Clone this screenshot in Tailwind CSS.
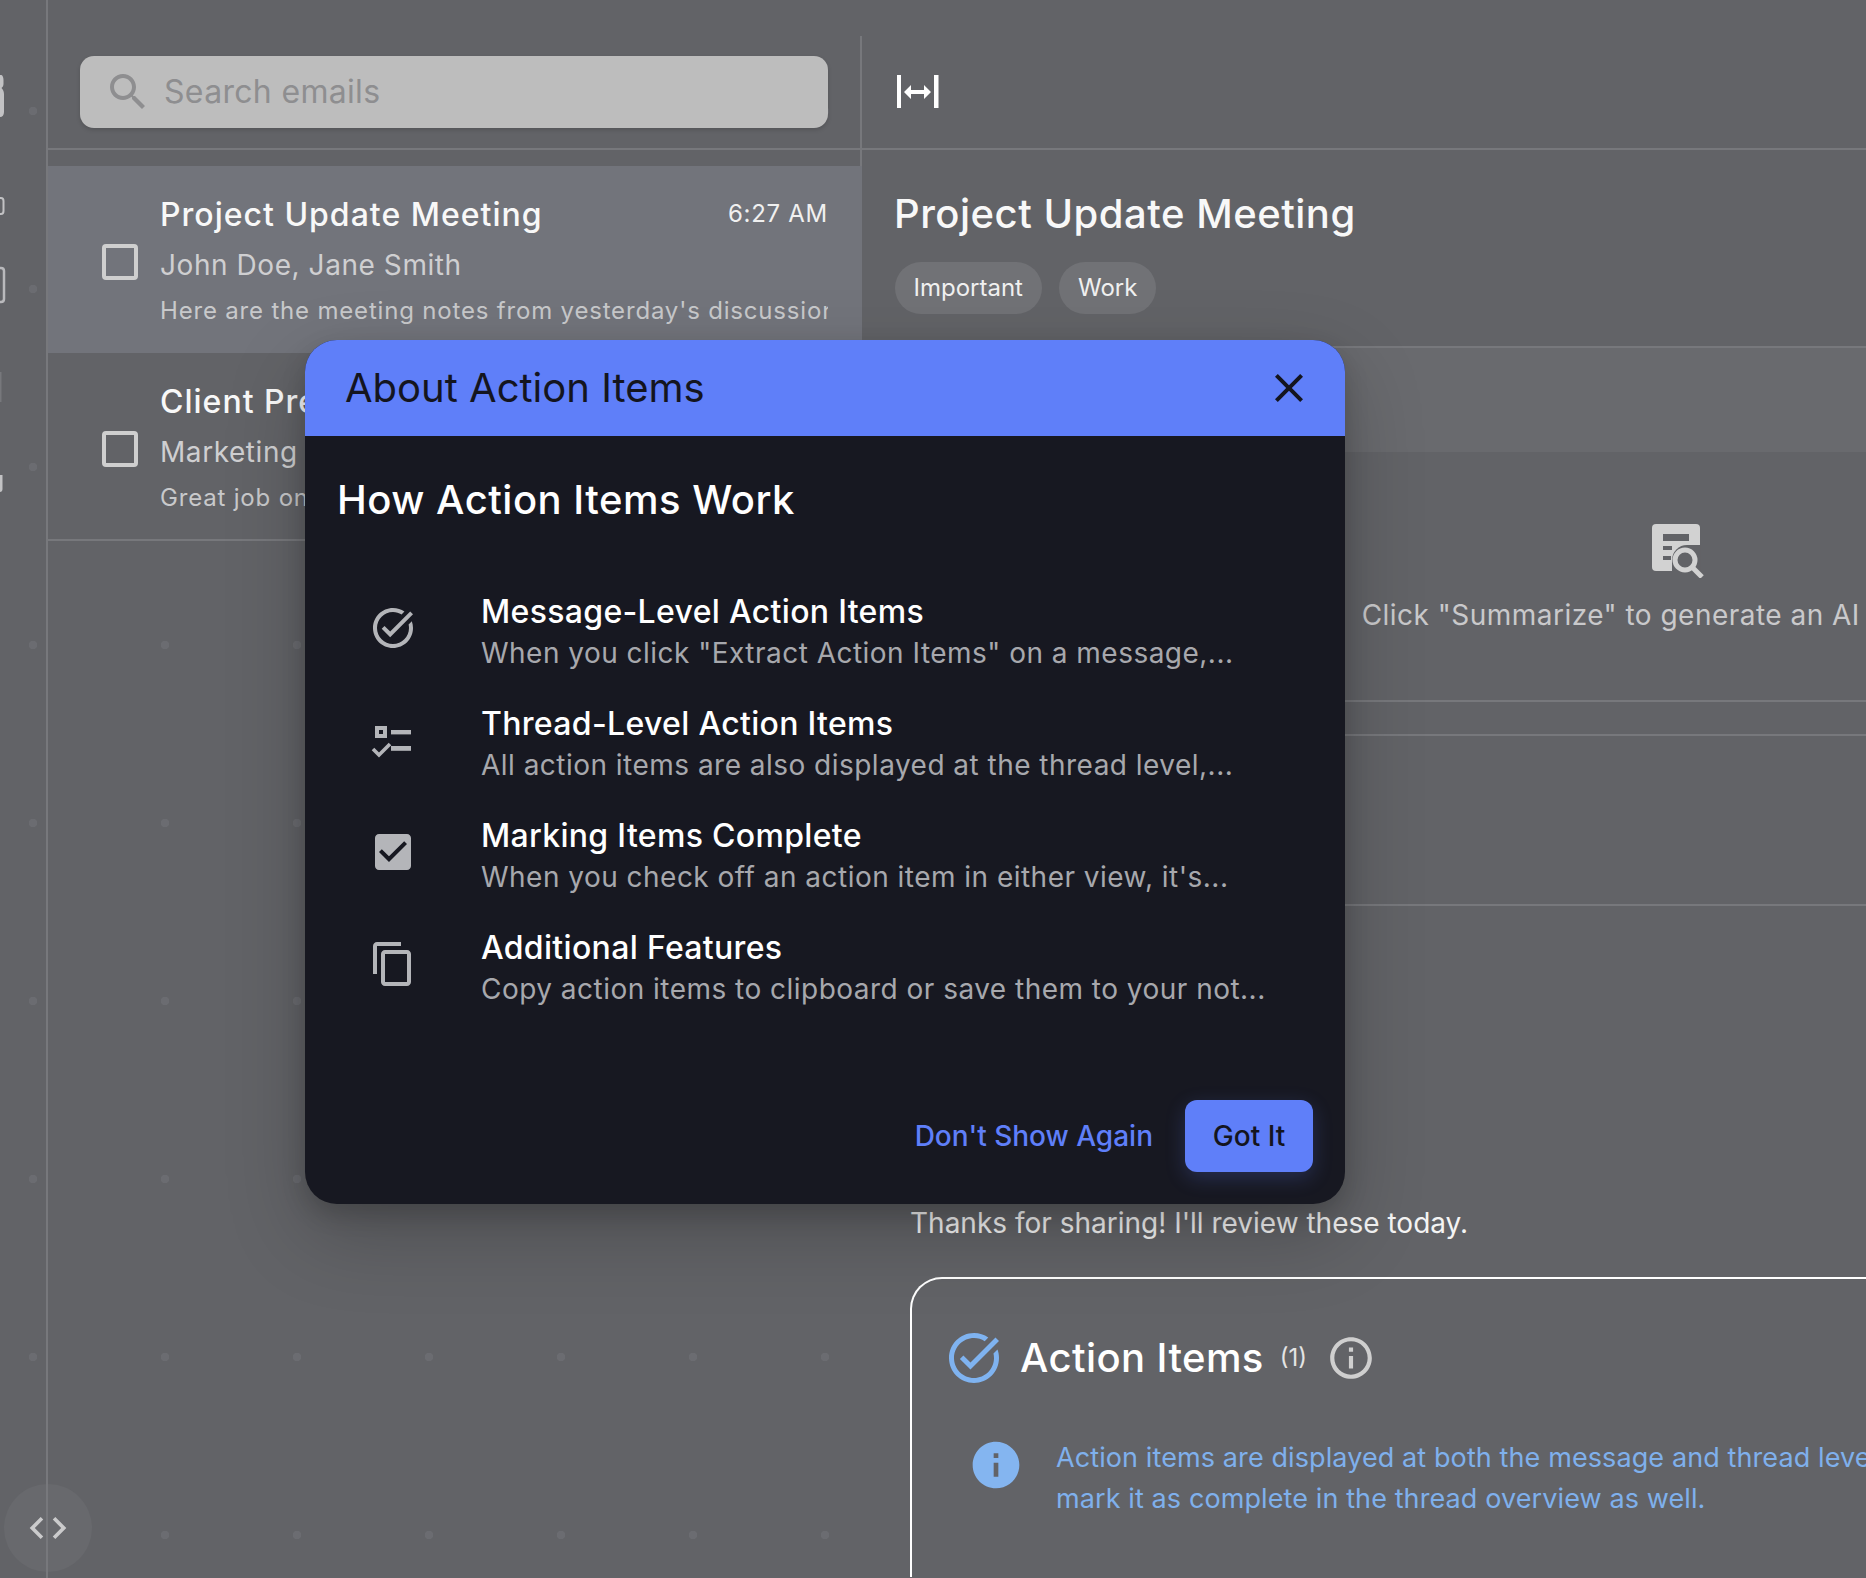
<!doctype html>
<html>
<head>
<meta charset="utf-8">
<script src="https://cdn.jsdelivr.net/npm/@tailwindcss/browser@4"></script>
<title>Email</title>
</head>
<body class="relative w-[1866px] h-[1578px] overflow-hidden bg-[#626367] bg-[radial-gradient(circle,#6b6c71_4px,transparent_4.5px)] bg-[size:132px_178px] bg-[position:-33px_22px] [font-family:Inter,sans-serif] text-white">
<div class="flex w-[2494px] h-[1578px] overflow-hidden">
  <!-- rail -->
  <aside class="relative shrink-0 w-[48px] h-full border-r-2 border-[#77787c]">
    <svg class="absolute left-0 top-0" width="8" height="520" fill="none">
      <path d="M0 75h1c1.500 0 2.500 2 2.500 5v4c0 2-1 3-2 4 1 1 2.500 3 2.500 6v18c0 3-1.500 5-4 5" fill="#c2c2c4"/>
      <path d="M0 198h1c1.500 0 2.500 1 2.500 3v10c0 2-1 3-2.500 3H0" stroke="#c2c2c4" stroke-width="2"/>
      <path d="M0 268h1c1.500 0 3 1 3 3v28c0 2-1.500 3-3 3H0" stroke="#b9b9bc" stroke-width="2.500"/>
      <rect x="0" y="372" width="1.500" height="30" fill="#77787c"/>
      <path d="M0 475h2.500v14c0 2-1 3-2.500 3z" fill="#c2c2c4"/>
    </svg>
    <div class="absolute left-[4px] top-[1484px] w-[88px] h-[88px] rounded-full bg-[#68696d] flex items-center justify-center">
      <svg width="44" height="44" viewBox="0 0 24 24" fill="#cbcbcc"><path d="M9.400 16.600 4.800 12l4.600-4.600L8 6l-6 6 6 6 1.400-1.400zm5.200 0 4.600-4.600-4.600-4.600L16 6l6 6-6 6-1.400-1.400z"/></svg>
      <span class="absolute left-[42px] top-0 w-[2px] h-[88px] bg-[#77787c]"></span>
    </div>
  </aside>

  <!-- list -->
  <section class="shrink-0 w-[814px] flex flex-col">
    <div class="shrink-0 mt-[36px] h-[130px] border-r-2 border-[#77787c]">
      <div class="h-[114px] border-b-2 border-[#77787c] pt-[20px] pl-[32px] pr-[32px]">
        <div class="w-[748px] h-[72px] rounded-[14px] bg-[#bdbdbd] shadow-[0_2px_4px_rgba(0,0,0,0.15)] flex items-center pl-[24px]">
          <svg width="48" height="48" viewBox="0 0 24 24" fill="#8e8e90"><path d="M15.500 14h-.79l-.28-.27C15.410 12.590 16 11.110 16 9.500 16 5.910 13.090 3 9.500 3S3 5.910 3 9.500 5.910 16 9.500 16c1.610 0 3.090-.59 4.230-1.570l.27.28v.79l5 4.990L20.490 19l-4.990-5zm-6 0C7.010 14 5 11.990 5 9.500S7.010 5 9.500 5 14 7.010 14 9.500 11.990 14 9.500 14z"/></svg>
          <span class="ml-[12px] text-[32px] leading-[40px] tracking-[0.01em] text-[#8e8e90]">Search emails</span>
        </div>
      </div>
    </div>

    <div class="shrink-0 -ml-[2px] w-[816px] h-[187px] bg-[#72747b] flex items-start pl-[56px] pr-[34px] py-[24px]">
      <div class="mt-[54px] shrink-0 w-[36px] h-[36px] rounded-[4px] border-4 border-[#cfcfcf]"></div>
      <div class="ml-[22px] w-[668px] overflow-hidden">
        <div class="flex justify-between items-center h-[48px]">
          <span class="relative top-[1px] text-[32px] font-[450] tracking-[1px] text-[#f8f8f8]">Project Update Meeting</span>
          <span class="text-[24px] tracking-[0.03em] text-[#f0f0f0]">6:27 AM</span>
        </div>
        <div class="mt-[7px] h-[40px] leading-[40px] text-[28px] tracking-[0.02em] text-[#cfcfd1] whitespace-nowrap">John Doe, Jane Smith</div>
        <div class="mt-[8px] h-[36px] leading-[36px] text-[24px] tracking-[0.034em] text-[#c8c9cb] whitespace-nowrap">Here are the meeting notes from yesterday's discussion about the project</div>
      </div>
    </div>
    <div class="shrink-0 w-[812px] h-[188px] bg-[#626367] border-b-2 border-[#77787c] flex items-start pl-[54px] pr-[32px] py-[24px]">
      <div class="mt-[54px] shrink-0 w-[36px] h-[36px] rounded-[4px] border-4 border-[#cfcfcf]"></div>
      <div class="ml-[22px] w-[668px] overflow-hidden">
        <div class="flex justify-between items-center h-[48px]">
          <span class="relative top-[1px] text-[32px] font-[450] tracking-[1px] text-[#f8f8f8]">Client Presentation</span>
        </div>
        <div class="mt-[7px] h-[40px] leading-[40px] text-[28px] tracking-[0.02em] text-[#cfcfd1] whitespace-nowrap">Marketing Team</div>
        <div class="mt-[8px] h-[36px] leading-[36px] text-[24px] tracking-[0.034em] text-[#c8c9cb] whitespace-nowrap">Great job on the presentation today</div>
      </div>
    </div>
  </section>

  <!-- detail -->
  <section class="shrink-0 w-[1632px] h-full bg-[#626367] flex flex-col">
    <div class="shrink-0 h-[150px] border-b-2 border-[#77787c] pl-[35px] pt-[75px]">
      <svg width="44" height="34" viewBox="0 0 44 34" fill="#ffffff">
        <rect x="0" y="0" width="4" height="33"/><rect x="37" y="0" width="4.500" height="33"/>
        <path d="M7 17l7-7v5h13v-5l7 7-7 7v-5H14v5z"/>
      </svg>
    </div>
    <div class="shrink-0 h-[198px] border-b-2 border-[#77787c] pl-[33px] pt-[32px]">
      <div class="h-[64px] leading-[64px] -ml-[1px] text-[40px] font-[450] tracking-[0.5px] text-[#f8f8f8]">Project Update Meeting</div>
      <div class="mt-[16px] -ml-[0.5px] flex gap-[17px]">
        <span class="h-[52px] px-[19px] rounded-full bg-[#717276] text-[24px] leading-[52px] text-[#f0f0f0]">Important</span>
        <span class="h-[52px] px-[19px] rounded-full bg-[#717276] text-[24px] leading-[52px] text-[#f0f0f0]">Work</span>
      </div>
    </div>
    <div class="shrink-0 h-[104px] bg-[#696a6e]"></div>
    <div class="shrink-0 h-[250px] border-b-2 border-[#77787c] flex flex-col items-center">
      <svg class="mt-[70px]" width="56" height="56" viewBox="0 0 56 56">
        <rect x="2" y="2" width="48" height="47" rx="4" fill="#d2d2d2"/>
        <rect x="13" y="12" width="26" height="7" fill="#626367"/>
        <rect x="13" y="24" width="9" height="4" fill="#626367"/>
        <rect x="13" y="34" width="8" height="4" fill="#626367"/>
        <path d="M22 50V38a15 15 0 0 1 15-15h13.500V50z" fill="#626367"/>
        <circle cx="35" cy="38" r="10" fill="none" stroke="#d2d2d2" stroke-width="5"/>
        <path d="M42 45l10 10" stroke="#d2d2d2" stroke-width="5"/>
      </svg>
      <div class="mt-[17px] whitespace-nowrap text-[28px] leading-[40px] tracking-[0.017em] text-[#c9c9cb]">Click "Summarize" to generate an AI summary</div>
    </div>
    <div class="shrink-0 h-[34px] border-b-2 border-[#77787c]"></div>
    <div class="shrink-0 h-[170px] border-b-2 border-[#77787c]"></div>
    <div class="shrink-0 pl-[48px] pt-[297px]">
      <div class="h-[40px] leading-[40px] text-[28px] text-[#f4f4f4]">Thanks for sharing! I'll review these today.</div>
      <div class="mt-[34px] w-[1500px] h-[300px] rounded-t-[32px] border-2 border-b-0 border-white">
        <div class="flex items-center pl-[32px] pt-[49px]">
          <svg width="60" height="60" viewBox="0 0 24 24" fill="#7fb3f0"><path d="M22 5.180 10.590 16.600l-4.240-4.240 1.410-1.410 2.830 2.830 10-10L22 5.180zm-2.210 5.040c.13.570.21 1.170.21 1.780 0 4.420-3.580 8-8 8s-8-3.580-8-8 3.580-8 8-8c1.580 0 3.040.46 4.280 1.250l1.440-1.440C16.100 2.670 14.130 2 12 2 6.480 2 2 6.480 2 12s4.480 10 10 10 10-4.480 10-10c0-1.190-.22-2.330-.6-3.390l-1.610 1.610z"/></svg>
          <span class="ml-[16px] text-[40px] leading-[60px] font-[450] tracking-[0.01em]">Action Items</span>
          <span class="ml-[16px] text-[24px] leading-[60px] text-[#e4e4e4]">(1)</span>
          <svg class="ml-[19px]" width="50" height="50" viewBox="0 0 24 24" fill="#cfcfcf"><path d="M11 7h2v2h-2zm0 4h2v6h-2zm1-9C6.480 2 2 6.480 2 12s4.480 10 10 10 10-4.480 10-10S17.520 2 12 2zm0 18c-4.410 0-8-3.590-8-8s3.590-8 8-8 8 3.590 8 8-3.590 8-8 8z"/></svg>
        </div>
        <div class="flex pl-[56px] pt-[49px]">
          <svg class="shrink-0" width="56" height="56" viewBox="0 0 24 24" fill="#84b5f0"><path d="M12 2C6.480 2 2 6.480 2 12s4.480 10 10 10 10-4.480 10-10S17.520 2 12 2zm1 15h-2v-6h2v6zm0-8h-2V7h2v2z"/></svg>
          <div class="ml-[32px] text-[27px] leading-[41px] tracking-[0.1px] text-[#7fb0ec] whitespace-nowrap">Action items are displayed at both the message and thread level. When you complete an item,<br>mark it as complete in the thread overview as well.</div>
        </div>
      </div>
    </div>
  </section>
</div>

<!-- dialog -->
<div class="absolute left-[305px] top-[340px] w-[1040px] h-[864px] rounded-[32px] bg-[#171821] shadow-[0_30px_80px_rgba(0,0,0,0.22),0_10px_25px_rgba(0,0,0,0.16)] flex flex-col">
  <div class="h-[96px] shrink-0 rounded-t-[32px] bg-[#5f7ff9] flex items-center justify-between pl-[40px] pr-[32px]">
    <span class="text-[40px] text-[#14151f]">About Action Items</span>
    <svg width="48" height="48" viewBox="0 0 24 24" fill="#14151f"><path d="M19 6.410 17.590 5 12 10.590 6.410 5 5 6.410 10.590 12 5 17.590 6.410 19 12 13.410 17.590 19 19 17.590 13.410 12 19 6.410z"/></svg>
  </div>
  <div class="pl-[32px] pt-[34px] h-[140px] shrink-0 text-[40px] leading-[60px] font-medium tracking-[0.5px] text-white">How Action Items Work</div>
  <div class="pl-[64px] flex flex-col">
    <div class="h-[112px] flex items-start">
      <svg class="mt-[28px] shrink-0" width="48" height="48" viewBox="0 0 24 24" fill="#b4b5b9"><path d="M22 5.180 10.590 16.600l-4.240-4.240 1.410-1.410 2.830 2.830 10-10L22 5.180zm-2.210 5.040c.13.570.21 1.170.21 1.780 0 4.420-3.580 8-8 8s-8-3.580-8-8 3.580-8 8-8c1.580 0 3.040.46 4.280 1.250l1.440-1.440C16.100 2.670 14.130 2 12 2 6.480 2 2 6.480 2 12s4.480 10 10 10 10-4.480 10-10c0-1.190-.22-2.330-.6-3.390l-1.610 1.610z"/></svg>
      <div class="ml-[64px] pt-[12px]">
        <div class="h-[48px] leading-[48px] text-[32px] font-[450] tracking-[0.01em]">Message-Level Action Items</div>
        <div class="-mt-[3px] h-[40px] leading-[40px] text-[28px] tracking-[0.017em] text-[#a7a8ad] whitespace-nowrap">When you click "Extract Action Items" on a message,...</div>
      </div>
    </div>
    <div class="h-[112px] flex items-start">
      <svg class="mt-[28px] shrink-0" width="48" height="48" viewBox="0 0 24 24" fill="#b4b5b9"><path fill-rule="evenodd" d="M3 5h6v6H3zM5 7v2h2V7z"/><rect x="11" y="7" width="10" height="2.200"/><rect x="11" y="15" width="10" height="2.400"/><path d="M2 16.500 5 19.500 10.500 14" fill="none" stroke="#b4b5b9" stroke-width="1.800"/></svg>
      <div class="ml-[64px] pt-[12px]">
        <div class="h-[48px] leading-[48px] text-[32px] font-[450] tracking-[0.01em]">Thread-Level Action Items</div>
        <div class="-mt-[3px] h-[40px] leading-[40px] text-[28px] tracking-[0.017em] text-[#a7a8ad] whitespace-nowrap">All action items are also displayed at the thread level,...</div>
      </div>
    </div>
    <div class="h-[112px] flex items-start">
      <svg class="mt-[28px] shrink-0" width="48" height="48" viewBox="0 0 24 24" fill="#b4b5b9"><path d="M19 3H5c-1.110 0-2 .9-2 2v14c0 1.100.89 2 2 2h14c1.110 0 2-.9 2-2V5c0-1.100-.89-2-2-2zm-9 14l-5-5 1.410-1.410L10 14.170l7.590-7.590L19 8l-9 9z"/></svg>
      <div class="ml-[64px] pt-[12px]">
        <div class="h-[48px] leading-[48px] text-[32px] font-[450] tracking-[0.01em]">Marking Items Complete</div>
        <div class="-mt-[3px] h-[40px] leading-[40px] text-[28px] tracking-[0.017em] text-[#a7a8ad] whitespace-nowrap">When you check off an action item in either view, it's...</div>
      </div>
    </div>
    <div class="h-[112px] flex items-start">
      <svg class="mt-[28px] shrink-0" width="48" height="48" viewBox="0 0 24 24" fill="#b4b5b9"><path d="M16 1H4c-1.100 0-2 .9-2 2v14h2V3h12V1zm3 4H8c-1.100 0-2 .9-2 2v14c0 1.100.9 2 2 2h11c1.100 0 2-.9 2-2V7c0-1.100-.9-2-2-2zm0 16H8V7h11v14z"/></svg>
      <div class="ml-[64px] pt-[12px]">
        <div class="h-[48px] leading-[48px] text-[32px] font-[450] tracking-[0.01em]">Additional Features</div>
        <div class="-mt-[3px] h-[40px] leading-[40px] text-[28px] tracking-[0.017em] text-[#a7a8ad] whitespace-nowrap">Copy action items to clipboard or save them to your not...</div>
      </div>
    </div>
  </div>
  <div class="absolute right-[32px] top-[760px] flex items-center gap-[32px]">
    <span class="text-[28px] font-medium text-[#5f7ff9]">Don't Show Again</span>
    <span class="w-[128px] h-[72px] rounded-[12px] bg-[#5f7ff9] shadow-[0_6px_20px_rgba(95,127,249,0.22)] flex items-center justify-center text-[28px] font-medium text-[#14151f]">Got It</span>
  </div>
</div>
</body>
</html>
